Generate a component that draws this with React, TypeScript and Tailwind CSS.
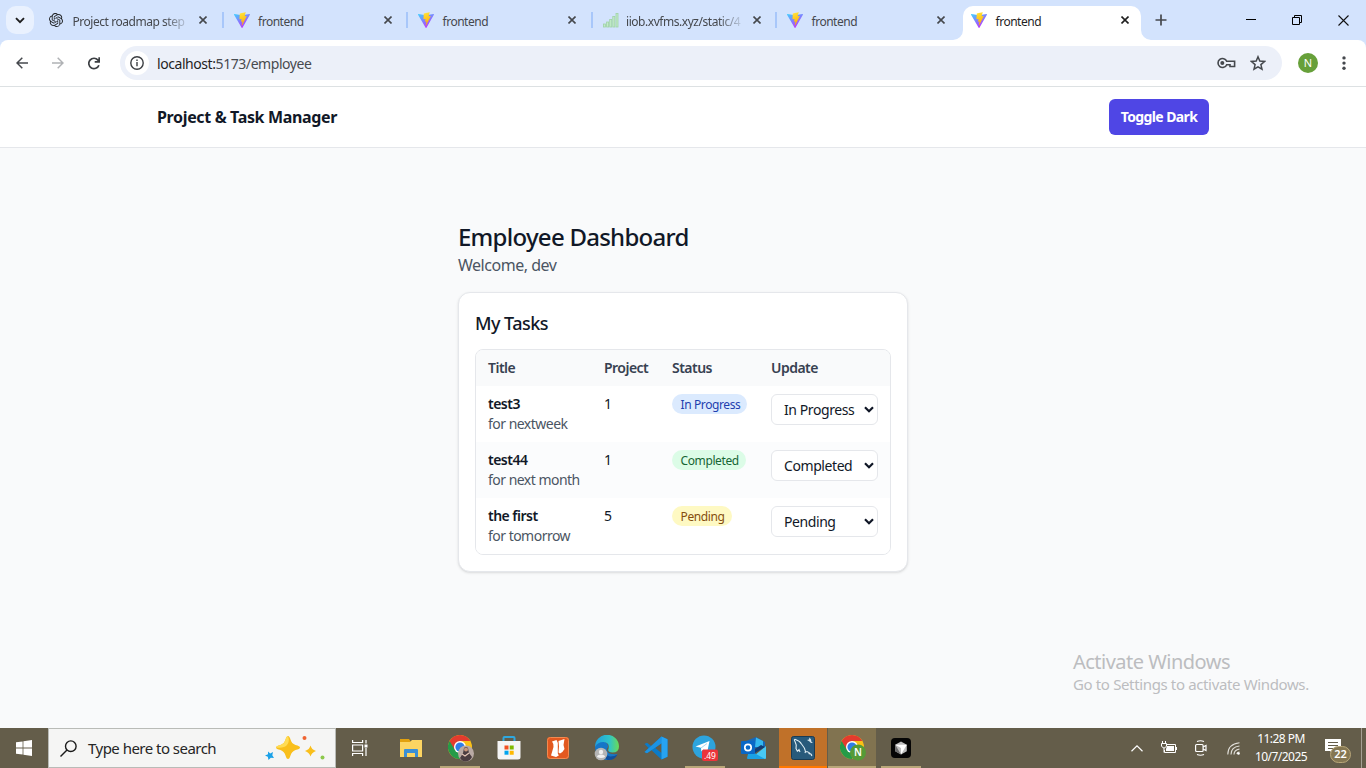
import React, { type ReactNode } from "react";

const tabs = [
  { title: "Project roadmap step", icon: "gpt", fade: true },
  { title: "frontend", icon: "vite" },
  { title: "frontend", icon: "vite" },
  { title: "iiob.xvfms.xyz/static/4", icon: "bars", fade: true },
  { title: "frontend", icon: "vite" },
  { title: "frontend", icon: "vite", active: true },
];

const tasks = [
  { title: "test3", note: "for nextweek", project: 1, status: "In Progress", badge: "bg-[#dbeafe] text-[#1e40af]" },
  { title: "test44", note: "for next month", project: 1, status: "Completed", badge: "bg-[#dcfce7] text-[#166534]" },
  { title: "the first", note: "for tomorrow", project: 5, status: "Pending", badge: "bg-[#fef9c3] text-[#854d0e]" },
];

function ViteIcon() {
  return (
    <svg width="16" height="16" viewBox="0 0 32 32">
      <defs>
        <linearGradient id="va" x1="0" y1="0" x2="0.6" y2="1">
          <stop offset="0" stopColor="#41d1ff" />
          <stop offset="1" stopColor="#bd34fe" />
        </linearGradient>
        <linearGradient id="vb" x1="0.4" y1="0" x2="0.6" y2="1">
          <stop offset="0" stopColor="#ffea83" />
          <stop offset="0.1" stopColor="#ffdd35" />
          <stop offset="1" stopColor="#ffa800" />
        </linearGradient>
      </defs>
      <path fill="url(#va)" d="M31.8 5.4 16.9 31.4a1 1 0 0 1-1.6 0L.1 5.4A1 1 0 0 1 1 4l15 2.6L30.9 4a1 1 0 0 1 .9 1.4Z" />
      <path fill="url(#vb)" d="m22.900.300-11 2.100a.4.4 0 0 0-.3.400l-.700 11.400a.4.4 0 0 0 .5.400l3.100-.7a.4.4 0 0 1 .5.500l-.9 4.500a.4.4 0 0 0 .500.500l1.900-.6a.4.4 0 0 1 .500.500l-1.500 7c0 .5.500.700.800.300l.2-.3 8.900-17.800a.4.4 0 0 0-.4-.6l-3.100.6a.4.4 0 0 1-.5-.500l2-7.300a.4.4 0 0 0-.500-.500Z" />
    </svg>
  );
}

function GptIcon() {
  return (
    <svg width="14" height="14" viewBox="0 0 24 24" fill="#202326" className="mt-px">
      <path d="M22.282 9.821a5.985 5.985 0 0 0-.516-4.91 6.046 6.046 0 0 0-6.51-2.9A6.065 6.065 0 0 0 4.981 4.18a5.985 5.985 0 0 0-3.998 2.9 6.046 6.046 0 0 0 .743 7.097 5.98 5.98 0 0 0 .51 4.911 6.051 6.051 0 0 0 6.515 2.9A5.985 5.985 0 0 0 13.26 24a6.056 6.056 0 0 0 5.772-4.206 5.99 5.99 0 0 0 3.997-2.9 6.056 6.056 0 0 0-.747-7.073zM13.26 22.43a4.476 4.476 0 0 1-2.876-1.04l.141-.081 4.779-2.758a.795.795 0 0 0 .392-.681v-6.737l2.02 1.168a.071.071 0 0 1 .038.052v5.583a4.504 4.504 0 0 1-4.494 4.494zM3.6 18.304a4.47 4.47 0 0 1-.535-3.014l.142.085 4.783 2.759a.771.771 0 0 0 .78 0l5.843-3.369v2.332a.08.08 0 0 1-.033.062L9.74 19.95a4.5 4.5 0 0 1-6.14-1.646zM2.34 7.896a4.485 4.485 0 0 1 2.366-1.973V11.6a.766.766 0 0 0 .388.676l5.815 3.355-2.02 1.168a.076.076 0 0 1-.071 0l-4.83-2.786A4.504 4.504 0 0 1 2.34 7.872zm16.597 3.855-5.833-3.387L15.119 7.2a.076.076 0 0 1 .071 0l4.83 2.791a4.494 4.494 0 0 1-.676 8.105v-5.678a.79.79 0 0 0-.407-.667zm2.01-3.023-.141-.085-4.774-2.782a.776.776 0 0 0-.785 0L9.409 9.23V6.897a.066.066 0 0 1 .028-.061l4.83-2.787a4.5 4.5 0 0 1 6.68 4.66zm-12.64 4.135-2.02-1.164a.08.08 0 0 1-.038-.057V6.075a4.5 4.5 0 0 1 7.375-3.453l-.142.08L8.704 5.46a.795.795 0 0 0-.393.681zm1.097-2.365 2.602-1.5 2.607 1.5v2.999l-2.597 1.5-2.607-1.5z" />
    </svg>
  );
}

function BarsIcon() {
  return (
    <svg width="16" height="16" viewBox="0 0 16 16" fill="#c3ebc9" stroke="#9fd3a6" strokeWidth="0.8">
      <rect x="0.500" y="12" width="2" height="3" />
      <rect x="3.600" y="10" width="2" height="5" />
      <rect x="6.700" y="7.500" width="2" height="7.500" />
      <rect x="9.800" y="4.500" width="2" height="10.500" />
      <rect x="13" y="1.500" width="2" height="13.500" />
    </svg>
  );
}

function Cross({ color }: { color: string }) {
  return (
    <svg width="8" height="8" viewBox="0 0 8 8" stroke={color} strokeWidth="1.6">
      <path d="M.5.5l7 7M7.500.5l-7 7" />
    </svg>
  );
}

function TabStrip() {
  return (
    <div className="flex h-10 bg-[#d3e3fd]">
      <div className="w-[38px] shrink-0 pl-1.5 pt-1.5">
        <div className="flex h-7 w-7 items-center justify-center rounded-[10px] bg-[#e9f1fe]">
          <svg width="10" height="7" viewBox="0 0 10 7" fill="none" stroke="#1f1f1f" strokeWidth="1.9">
            <path d="M1 1.200l4 4 4-4" />
          </svg>
        </div>
      </div>
      {tabs.map((t, i) => (
        <div key={i} className="flex w-[184.5px] shrink-0">
          <div
            className={
              t.active
                ? "relative ml-[2.500px] mt-1.5 flex h-[34px] w-[178px] items-center rounded-t-[10px] bg-white pb-[6px] pl-[8px] text-[#1f1f1f]"
                : "relative mt-1.5 flex h-[34px] w-full items-center pb-[6px] pl-[11px] text-[#45484d]"
            }
          >
            {t.active && (
              <>
                <svg className="absolute -left-[10px] bottom-0" width="10" height="10"><path fill="#fff" d="M10 0v10H0A10 10 0 0 0 10 0Z" /></svg>
                <svg className="absolute -right-[10px] bottom-0" width="10" height="10"><path fill="#fff" d="M0 0v10h10A10 10 0 0 1 0 0Z" /></svg>
              </>
            )}
            <div className="h-4 w-4">{t.icon === "vite" ? <ViteIcon /> : t.icon === "gpt" ? <GptIcon /> : <BarsIcon />}</div>
            <div
              className={
                t.fade
                  ? "ml-[7.500px] w-[114.500px] whitespace-nowrap [mask-image:linear-gradient(90deg,#000_80%,rgba(0,0,0,0.15)_100%)]"
                  : "ml-[8.500px] w-[113.500px] whitespace-nowrap"
              }
            >
              <span className={t.fade ? "text-[12px] leading-4 tracking-[-0.038em]" : "text-[12px] leading-4 tracking-[-0.04em]"}>{t.title}</span>
            </div>
            <div className="ml-[12px]"><Cross color={t.active ? "#1f1f1f" : "#45484d"} /></div>
            {!t.active && i < 4 && <div className="absolute -right-px top-1.5 h-4 w-0.5 bg-[#a8c7fa]" />}
          </div>
        </div>
      ))}
      <div className="flex grow items-center">
        <svg className="ml-[10px]" width="12" height="12" viewBox="0 0 12 12" stroke="#45484d" strokeWidth="1.7"><path d="M6 .5v11M.5 6h11" /></svg>
        <svg className="ml-[79px]" width="10" height="10"><rect y="4" width="10" height="1" /></svg>
        <svg className="ml-[36px]" width="10" height="10" viewBox="0 0 10 10" fill="none" stroke="#000"><path d="M.5 2.500h7v7h-7zM2.500 2.500v-2h7v7h-2" /></svg>
        <svg className="ml-[36px]" width="11" height="11" viewBox="0 0 11 11" stroke="#111" strokeWidth="1.100"><path d="M.5.5l10 10M10.500.5l-10 10" /></svg>
      </div>
    </div>
  );
}

function Toolbar() {
  return (
    <div className="bg-[#d3e3fd]">
      <div className="flex h-[47px] items-start rounded-t-lg border-b border-[#dde1e3] bg-white pt-1.5">
        <div className="flex h-[34px] w-[120px] items-center">
          <svg className="ml-4" width="12" height="12" viewBox="0 0 12 12" fill="none" stroke="#45484d" strokeWidth="1.500"><path d="M12 6H1M6.300.7 1 6l5.300 5.300" /></svg>
          <svg className="ml-6" width="12" height="12" viewBox="0 0 12 12" fill="none" stroke="#b0b2b5" strokeWidth="1.500"><path d="M0 6h11M5.700.7 11 6l-5.300 5.300" /></svg>
          <svg className="ml-6" width="12" height="13" viewBox="0 0 12 13" fill="none" stroke="#3c3f43" strokeWidth="1.700"><path d="M10.900 8.200A5.200 5.200 0 1 1 10 3.100l1 1.200M11.200.300v4.500H6.700" /></svg>
        </div>
        <div className="flex h-[34px] w-[1162px] items-center rounded-full bg-[#ecf0f9] pl-[5px] pr-[16px]">
          <div className="flex h-6 w-6 items-center justify-center rounded-full bg-white">
            <svg width="14" height="14" viewBox="0 0 14 14" fill="none" stroke="#3c3f43" strokeWidth="1.400"><circle cx="7" cy="7" r="6.200" /><path d="M7 6v4.200M7 3.600v1.500" /></svg>
          </div>
          <div className="ml-2 grow text-[14px] tracking-[-0.031em] text-[#474a4f]"><span className="text-[#1f1f1f]">localhost:</span>5173/employee</div>
          <svg width="19" height="12" viewBox="0 0 19 12" fill="none" stroke="#45484d" strokeWidth="1.600">
            <path d="M9.700 4.300A4.500 4.500 0 1 0 9.700 7.700H13v1.800h4.600V7.700 4.300Z" /><circle cx="5.300" cy="6" r="2" fill="#45484d" stroke="none" />
          </svg>
          <svg className="ml-[14px]" width="16" height="16" viewBox="0 0 16 16" fill="none" stroke="#45484d" strokeWidth="1.500"><path d="M8 1.800l1.800 4.300 4.700.4-3.600 3.100 1.100 4.600L8 11.800l-4 2.400 1.100-4.600L1.500 6.500l4.700-.4Z" /></svg>
        </div>
        <div className="ml-4 mt-[7px] flex h-5 w-5 items-center justify-center rounded-full bg-[#67a03a] text-[11px] text-white">N</div>
        <svg className="ml-[24px] mt-[10px]" width="4" height="14" fill="#45484d"><circle cx="2" cy="1.900" r="1.700" /><circle cx="2" cy="7.100" r="1.700" /><circle cx="2" cy="12.300" r="1.700" /></svg>
      </div>
    </div>
  );
}

function Page() {
  return (
    <div className="relative flex h-[641px] flex-col bg-[#f9fafb] text-[#111827]">
      <header className="flex h-[61px] items-center justify-between border-b border-[#e5e7eb] bg-white pl-[157px] pr-[157px]">
        <h1 className="whitespace-nowrap text-[16px] font-bold tracking-[-0.022em]">Project &amp; Task Manager</h1>
        <button className="h-9 w-[100px] whitespace-nowrap rounded-md bg-[#4f46e5] pb-px text-[14px] font-bold tracking-[-0.043em] text-white">Toggle Dark</button>
      </header>
      <main className="ml-[458px] mt-[73px] w-[450px]">
        <h2 className="h-8 whitespace-nowrap text-[24px] font-medium leading-8 tracking-[-0.031em]">Employee Dashboard</h2>
        <p className="h-6 text-[16px] leading-6 tracking-[-0.03em] text-[#4b5563]">Welcome, dev</p>
        <section className="mt-[15px] h-[280px] rounded-xl border border-[#e5e7eb] bg-white p-4 shadow-sm">
          <h3 className="text-[18px] font-medium leading-7 tracking-[-0.03em]">My Tasks</h3>
          <div className="mt-3 overflow-hidden rounded-lg border border-[#e5e7eb] text-[14px] tracking-[-0.037em]">
            <div className="grid h-9 grid-cols-[116px_68px_99px_131px] items-center bg-[#f9fafb] pb-0.5 font-semibold text-[#374151]">
              {["Title", "Project", "Status", "Update"].map((h) => <div key={h} className="pl-3">{h}</div>)}
            </div>
            {tasks.map((t, i) => (
              <div key={t.title} className={i === 1 ? "grid h-14 grid-cols-[116px_68px_99px_131px] bg-[#fbfcfd] pt-2" : "grid h-14 grid-cols-[116px_68px_99px_131px] bg-white pt-2"}>
                <div className="whitespace-nowrap pl-3 leading-5">
                  <div className="font-semibold">{t.title}</div>
                  <div className="text-[#4b5563]">{t.note}</div>
                </div>
                <div className="pl-3 leading-5">{t.project}</div>
                <div className="pl-3">
                  <div className={`flex h-5 w-fit items-center whitespace-nowrap rounded-full pl-[8.500px] pr-[7px] pt-0.5 text-[12px] tracking-[-0.032em] ${t.badge}`}>{t.status}</div>
                </div>
                <div className="pl-3">
                  <div className="flex h-[31px] w-[107px] items-center justify-between whitespace-nowrap rounded-md border border-[#e5e7eb] bg-white pl-3 pr-[3px] tracking-[-0.03em]">
                    {t.status}
                    <svg className="-mt-px" width="10" height="7" viewBox="0 0 10 7" fill="none" stroke="#111827" strokeWidth="2.200"><path d="M1 1.200l4 4 4-4" /></svg>
                  </div>
                </div>
              </div>
            ))}
          </div>
        </section>
      </main>
      <div className="absolute left-[1073px] top-[562px] whitespace-nowrap text-[#bcbdc0]">
        <div className="text-[20px] leading-[26px] tracking-[-0.026em]">Activate Windows</div>
        <div className="-mt-px text-[15px] leading-5 tracking-[-0.024em]">Go to Settings to activate Windows.</div>
      </div>
    </div>
  );
}

function Chrome({ children }: { children?: ReactNode }) {
  return (
    <svg className="ml-[2px]" width="26" height="28" viewBox="0 0 26 28">
      <circle cx="12" cy="13" r="12" fill="#fbc116" />
      <path d="M1.600 7A12 12 0 0 0 12 25l5.200-9-5.200-3Z" fill="#259b48" />
      <path d="M1.600 7A12 12 0 0 1 22.400 7H12L7 16Z" fill="#e33b2e" />
      <circle cx="12" cy="13" r="6" fill="#fff" /><circle cx="12" cy="13" r="4.600" fill="#2f7de9" />
      {children}
    </svg>
  );
}

const apps: { icon: ReactNode; cls?: string; line?: string }[] = [
  { icon: <svg width="22" height="20" viewBox="0 0 22 20"><path fill="#e2a10e" d="M0 1h9l2 3H0z" /><path fill="#fcd462" d="M0 4h10l2-2h10v17H0z" /><path fill="#3b8fd6" d="M4 12q0-1 1-1h12q1 0 1 1v7h-3v-4H7v4H4z" /></svg> },
  {
    icon: <Chrome><circle cx="18" cy="19.500" r="8" fill="#b9aaa4" /><path d="M12 24l3-5 1-5q2-2 4 0l1 5 3 4q-2 4-6 4.500-4 0-6-3.500Z" fill="#4a3d40" /><circle cx="18" cy="15.500" r="2" fill="#c9987c" /><path d="M14 20l3 2 4-3" stroke="#e3c4b5" strokeWidth="1.200" fill="none" /></Chrome>,
    line: "bg-[#b9a779]",
  },
  { icon: <svg width="24" height="24" viewBox="0 0 24 24"><path d="M6.500 6V2q0-1 1-1h9q1 0 1 1v4" fill="none" stroke="#2fa8df" strokeWidth="2" /><path fill="#f5f5f5" d="M.5 5h23v16q0 2.500-2.500 2.500H3Q.5 23.500.5 21z" /><path fill="#f25022" d="M7.500 9.500h4v4h-4z" /><path fill="#7fba00" d="M12.700 9.500h4v4h-4z" /><path fill="#00a4ef" d="M7.500 14.700h4v4h-4z" /><path fill="#ffb900" d="M12.700 14.700h4v4h-4z" /></svg> },
  { icon: <svg width="22" height="22" viewBox="0 0 22 22"><rect width="22" height="22" rx="3" fill="#e2581f" /><rect x=".5" y=".5" width="21" height="21" rx="3" fill="none" stroke="#f28a50" /><path fill="#fff" d="M5 4.500 9.500 3q1.800 2.500 1.300 6v7.500l1 2L9 20l-5-1.500L6.500 10Q7 7 5 4.500ZM11.500 4l6-2-1 6 1 4q-1.500 3-4.500 4.500l-1.500-1 .5-6Z" /></svg> },
  {
    icon: (
      <svg width="26" height="26" viewBox="0 0 26 26">
        <defs>
          <linearGradient id="eg" x1="0" x2="1"><stop stopColor="#209fe0" /><stop offset=".6" stopColor="#2fc4c9" /><stop offset="1" stopColor="#6bdb55" /></linearGradient>
        </defs>
        <path d="M1 12q2-5 7-5.500 6 0 6 5.500-2 1.500-1 4 2 4 10.500 3Q20 25 13 25 2 24 1 12Z" fill="#1576c8" />
        <path d="M1 12A12 12 0 0 1 25 11.500q0 6-6.500 6-5.500-.5-4-3.500 1.500-6.500-5-7Q4 6.800 1 12Z" fill="url(#eg)" />
        <path d="M9.500 12q-1 8 6.500 9.500 4 .2 7.500-2-3 6-10 5.500Q6 22 9.500 12Z" fill="#114f9c" />
        <circle cx="7" cy="19" r="6.300" fill="#b5b5b5" /><circle cx="7" cy="17" r="2.200" fill="#f0f0f0" /><path fill="#f0f0f0" d="M3 22q0-2.500 4-2.500t4 2.500q-4 2-8 0Z" />
      </svg>
    ),
  },
  { icon: <svg width="24" height="24" viewBox="0 0 24 24"><path fill="#0b7bc9" d="m17.500.5 6 2.700v17.600l-6 2.700L7.200 14 3 17.200.5 16l4-4-4-4L3 6.800 7.200 10ZM17.600 7 11.300 12l6.300 5Z" /><path fill="#1c93e4" d="M17.500.5 18 7 3 17.200.5 16Z" /><path fill="#27a3f2" d="m17.500.5 6 2.700v17.600l-6 2.700Z" /></svg> },
  {
    icon: <svg width="26" height="28" viewBox="0 0 26 28"><circle cx="12" cy="13" r="11.500" fill="#2da4de" /><path fill="#fff" d="m3.500 12.500 14-5.500-2.300 11.300-3.800-2.800-2 2-.5-3.800Z" /><path stroke="#a9d6ee" d="M9 14l6-4.500" /><rect x="10" y="15.500" width="16" height="11.500" rx="2" fill="#eb343b" /><text x="18" y="24.700" textAnchor="middle" fontSize="8.500" fill="#fff">.49</text></svg>,
    line: "bg-[#b9a779]",
  },
  { icon: <svg width="26" height="24" viewBox="0 0 26 24"><path fill="#1668b9" d="M5 5 15 1l9 5v6H5z" /><path fill="#35b8ef" d="M15 1.500 22 5v6h-8z" /><path fill="#48c9f4" d="M25 10v12q0 1-1 1H9Z" /><path fill="#123d75" d="m14 13 6-4 4 2-10 6Z" /><path fill="#1aa1e5" d="m8 14 16 9H7q-1 0-1-1Z" /><rect y="5" width="14" height="13" rx="1" fill="#0a67c6" /><circle cx="7" cy="11.500" r="3.200" fill="none" stroke="#fff" strokeWidth="1.700" /></svg> },
  {
    icon: <svg width="24" height="24" viewBox="0 0 24 24"><rect x=".5" y=".5" width="23" height="23" rx="2" fill="#285a7b" stroke="#183b55" /><path d="M6.500 15.500 5 12.500Q6 9 4 5.500 2.500 3 4.500 3.500 9 5 10.500 8q3.500 4 4 7.500 4 0 6.500 4.500M6.500 15.500l1.500-2 1 2.500M14.500 15.500l-.5 1.500M17.500 17.500l3.500 1" fill="none" stroke="#e1eef4" strokeWidth="1.100" /><path fill="#d8e8ef" d="m16 4 2-.5L18.500 1.500l1.500 2 .5 2.500 1.500 1-2 0-1.500-1.500Z" /></svg>,
    cls: "bg-[#c07129]", line: "bg-[#ff7800]",
  },
  { icon: <Chrome><circle cx="18" cy="18.500" r="8" fill="#569b37" /><text x="18" y="22" textAnchor="middle" fontSize="10" fontWeight="600" fill="#fff">N</text></Chrome>, cls: "bg-[#817350]", line: "bg-[#b9a779]" },
  { icon: <svg width="20" height="20" viewBox="0 0 20 20"><rect width="20" height="20" rx="4" fill="#050505" /><path fill="#bdbdbd" d="m10 3.500 5.800 3.200v6.600L10 16.500l-5.800-3.200V6.700Z" /><path fill="#6c6c6c" d="M4.200 6.700v6.600L10 16.500Z" /><path fill="#fff" d="M4.200 6.700h11.600L10 16.500V10Z" /></svg>, line: "bg-[#b9a779]" },
];

function Taskbar() {
  return (
    <div className="flex h-10 bg-[#645d4a] text-white">
      <div className="flex w-12 items-center justify-center">
        <svg width="16" height="16" viewBox="0 0 16 16" fill="#fff"><path d="M0 2.300 6.600 1.400v6.200H0zM7.400 1.300 16 0v7.600H7.400zM0 8.400h6.600v6.200L0 13.700zM7.400 8.400H16V16l-8.600-1.300z" /></svg>
      </div>
      <div className="flex w-[288px] items-center border border-[#b9bbb7] bg-[#f5f5f4] pl-[11px] text-[#262626]">
        <svg width="17" height="17" viewBox="0 0 17 17" fill="none" stroke="#1b1b1b" strokeWidth="1.400"><circle cx="10.800" cy="6.200" r="5.300" /><path d="M7 10 .500 16.500" /></svg>
        <div className="ml-[11px] grow whitespace-nowrap text-[15px] tracking-[-0.035em]">Type here to search</div>
        <svg className="mr-[9px]" width="62" height="26" viewBox="0 0 62 26">
          <path fill="#f9bf1c" d="M24 1q1.500 0 2.500 3.500 1 4 5 5.500 4.500 1 4.500 2.500t-4.500 2.500q-4 1.500-5 5.500-1 3.500-2.500 3.500t-2.500-3.500q-1-4-5-5.500-4.500-1-4.500-2.500t4.500-2.500q4-1.500 5-5.500 1-3.500 2.500-3.500Z" />
          <path fill="#ffdc55" d="M24 1q-1.500 0-2.500 3.500-1 4-5 5.500-4.500 1-4.500 2.500 8 1 11-2.500t1-9Z" />
          <path fill="#f9bf1c" d="M46.500 10.500q1 4 5.500 5.500-4.500 1.500-5.500 5.500-1-4-5.500-5.500 4.500-1.500 5.500-5.500Z" />
          <path fill="#1ba1e8" d="m4 16.500 2.200 2L9 17l-.7 3.200L10 23l-3.200-.3L4.500 25l-.7-3.200L1 20.500l3-1.200Z" />
          <circle cx="40.500" cy="3" r="2" fill="#ef6432" /><circle cx="58.500" cy="22.500" r="2" fill="#8cc84b" />
        </svg>
      </div>
      <div className="flex w-12 items-center justify-center">
        <svg width="16" height="16" viewBox="0 0 16 16" fill="none" stroke="#fff" strokeWidth="1.200"><path d="M.6 0v2.500h10V0M.6 5h10v6h-10zM.6 16v-2.500h10V16M14 0v3.500M14 8v8" /><path fill="#fff" stroke="none" d="M12.500 4.500h3v3h-3z" /></svg>
      </div>
      <div className="ml-[3px] flex gap-px">
        {apps.map((a, i) => (
          <div key={i} className={`flex h-10 w-12 flex-col items-center ${a.cls ?? ""}`}>
            <div className="flex h-[38px] items-center pt-0.5">{a.icon}</div>
            {a.line && <div className={`h-0.5 ${a.cls ? "w-12" : "w-10"} ${a.line}`} />}
          </div>
        ))}
      </div>
      <div className="ml-auto flex items-center">
        <svg width="12" height="7" viewBox="0 0 12 7" fill="none" stroke="#fff" strokeWidth="1.200"><path d="M.5 6.300 6 .9l5.500 5.400" /></svg>
        <svg className="ml-[18px]" width="16" height="14" viewBox="0 0 16 14" fill="none" stroke="#fff"><path d="M5 3.500h9.500v8h-11V9M1.500 0v2M4.500 0v2M.5 2.500h5V5q-1 2-2.500 2T.5 5ZM3 7v4.500" /><path fill="#fff" stroke="none" d="M6 5h7v5H5V8zM15 6h1v3h-1z" /></svg>
        <svg className="ml-[18px]" width="12" height="16" viewBox="0 0 12 16" fill="none" stroke="#fff" strokeWidth="1.200"><rect x=".6" y="4.500" width="7.500" height="7" rx="1" /><path d="M8 7l3-1.500v5L8 9M2 1.500Q5.500 0 9 1.500M2 14.500q3.500 1.500 7 0" /></svg>
        <svg className="ml-[20px]" width="14" height="13" viewBox="0 0 14 13" fill="none" stroke="#e2e0da" strokeWidth="1.100"><path d="M.8 12.500Q1 2 12.500.8M4 12.500Q4 5 12.500 4M7 12.500Q7 8 12.500 7M10 12q0-2 2.500-2" /><circle cx="11.500" cy="11.500" r="1.300" fill="#fff" stroke="none" /></svg>
        <div className="ml-[12px] w-[56px] whitespace-nowrap text-center text-[12px] leading-[18px] tracking-[-0.045em]"><div>11:28 PM</div><div>10/7/2025</div></div>
        <div className="relative ml-[16px] mr-[20px] h-[26px] w-[16px]">
          <svg className="mt-[4px]" width="16" height="16" viewBox="0 0 16 16"><path fill="#fff" d="M0 0h16v12H8v3l-3-3H0z" /><path stroke="#645d4a" d="M3 3.500h10M3 6.500h10M3 9.500h5" /></svg>
          <div className="absolute left-[5px] top-[11px] flex h-[17px] w-[21px] items-center justify-center rounded-full border border-[#b9a779] bg-[#857752] text-[11px] font-semibold">22</div>
        </div>
        <div className="h-10 w-px bg-[#a5a094]" /><div className="w-1" />
      </div>
    </div>
  );
}

export default function App() {
  return (
    <div className="h-[768px] w-[1366px] overflow-hidden font-['Noto_Sans',sans-serif]">
      <TabStrip />
      <Toolbar />
      <Page />
      <Taskbar />
    </div>
  );
}
